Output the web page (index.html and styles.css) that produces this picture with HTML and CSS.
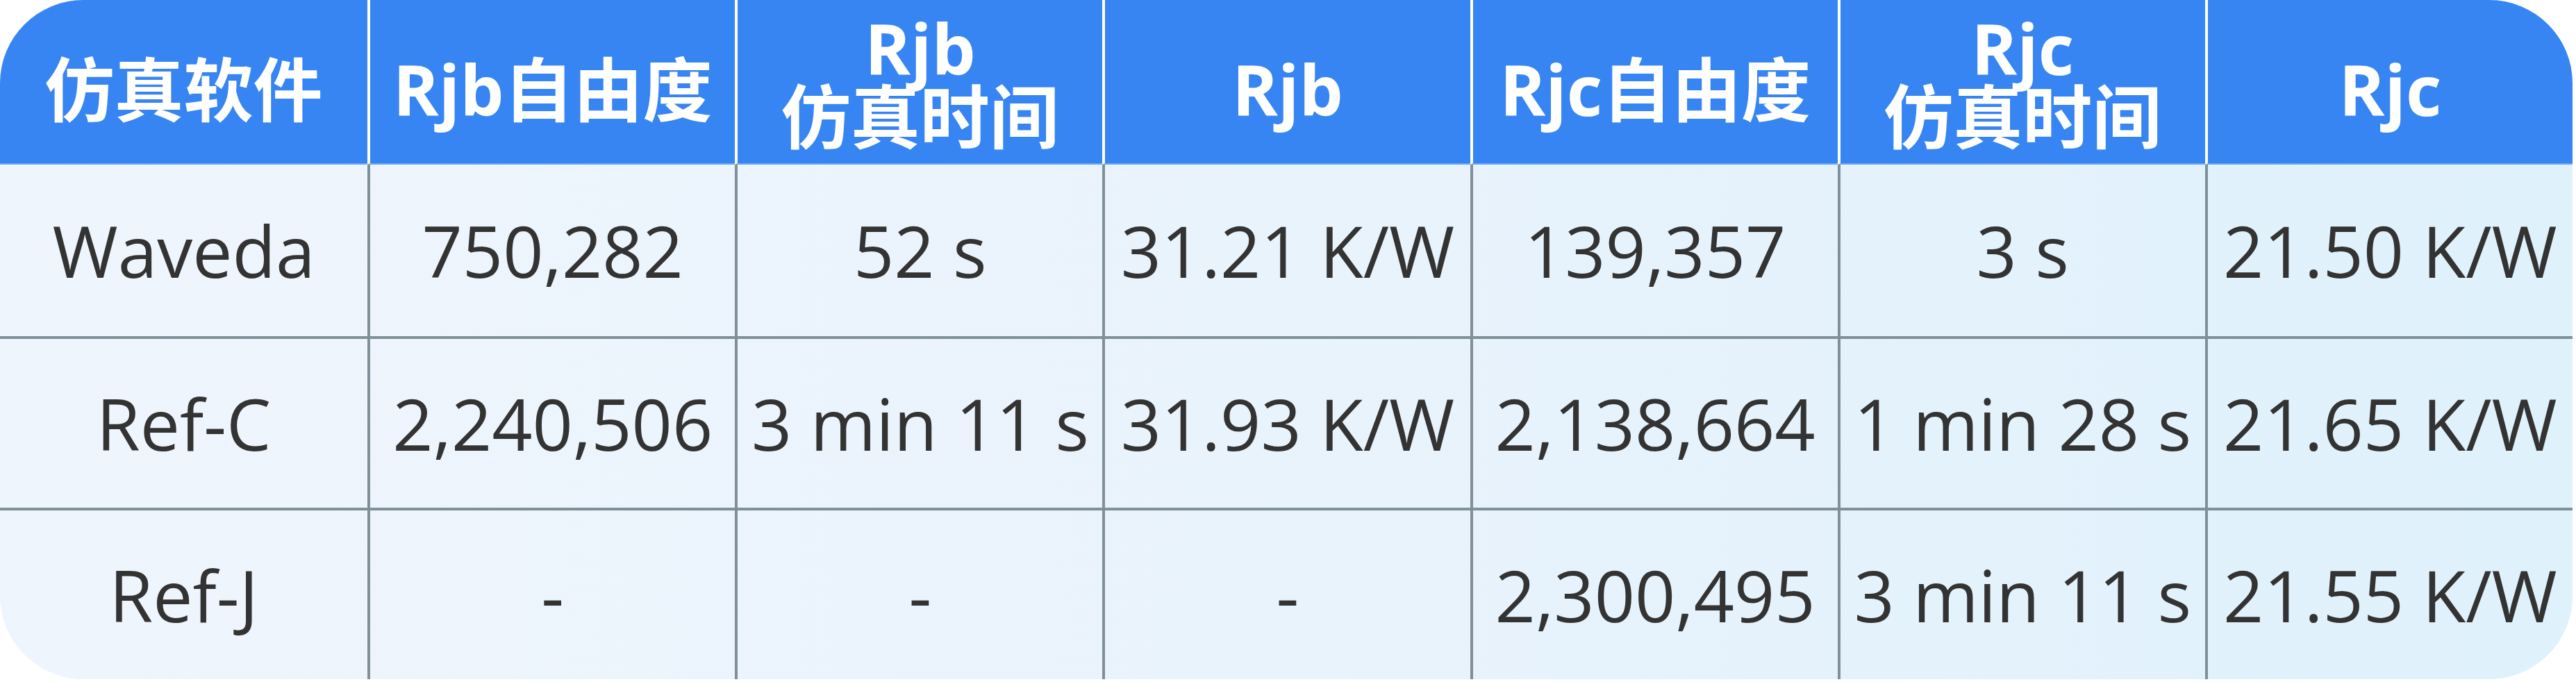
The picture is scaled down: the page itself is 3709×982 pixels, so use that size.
FILE: index.html
```html
<!DOCTYPE html>
<html lang="zh-CN">
<head>
<meta charset="utf-8">
<title>仿真软件对比</title>
<link rel="stylesheet" href="styles.css">
</head>
<body>
<div class="grid-table">
  <div class="hcell first">仿真软件</div>
  <div class="hcell">Rjb自由度</div>
  <div class="hcell two">Rjb<br>仿真时间</div>
  <div class="hcell">Rjb</div>
  <div class="hcell">Rjc自由度</div>
  <div class="hcell two">Rjc<br>仿真时间</div>
  <div class="hcell">Rjc</div>

  <div class="cell first">Waveda</div>
  <div class="cell">750,282</div>
  <div class="cell">52 s</div>
  <div class="cell">31.21 K/W</div>
  <div class="cell">139,357</div>
  <div class="cell">3 s</div>
  <div class="cell">21.50 K/W</div>

  <div class="cell first ruled">Ref-C</div>
  <div class="cell ruled">2,240,506</div>
  <div class="cell ruled">3 min 11 s</div>
  <div class="cell ruled">31.93 K/W</div>
  <div class="cell ruled">2,138,664</div>
  <div class="cell ruled">1 min 28 s</div>
  <div class="cell ruled">21.65 K/W</div>

  <div class="cell first ruled">Ref-J</div>
  <div class="cell ruled">-</div>
  <div class="cell ruled">-</div>
  <div class="cell ruled">-</div>
  <div class="cell ruled">2,300,495</div>
  <div class="cell ruled">3 min 11 s</div>
  <div class="cell ruled">21.55 K/W</div>
</div>
</body>
</html>
```

FILE: styles.css
```css
html, body {
  margin: 0;
  padding: 0;
  background: #ffffff;
}

.grid-table {
  width: 3704px;
  height: 978px;
  display: grid;
  grid-template-columns: repeat(7, 1fr);
  grid-template-rows: 237px repeat(3, 1fr);
  border-radius: 120px;
  overflow: hidden;
  background: linear-gradient(90deg, #eff5fd 0%, #e9f3fc 50%, #dff1fb 100%);
  font-family: "Open Sans", "Noto Sans CJK SC", sans-serif;
}

.hcell {
  box-sizing: border-box;
  background: #3785f2;
  color: #ffffff;
  font-family: "Open Sans", "Noto Sans CJK SC", sans-serif;
  font-weight: 700;
  font-size: 100px;
  line-height: 98px;
  text-align: center;
  white-space: nowrap;
  padding-top: 79px;
  border-left: 4px solid #ffffff;
  border-bottom: 2px solid #6aa6f5;
}

.hcell.two {
  padding-top: 20px;
}

.hcell.first {
  border-left: none;
}

.cell {
  box-sizing: border-box;
  display: flex;
  align-items: center;
  justify-content: center;
  color: #333333;
  font-size: 102px;
  white-space: nowrap;
  border-left: 4px solid #7f9099;
}

.cell.first {
  border-left: none;
}

.cell.ruled {
  border-top: 4px solid #7f9099;
}
```
